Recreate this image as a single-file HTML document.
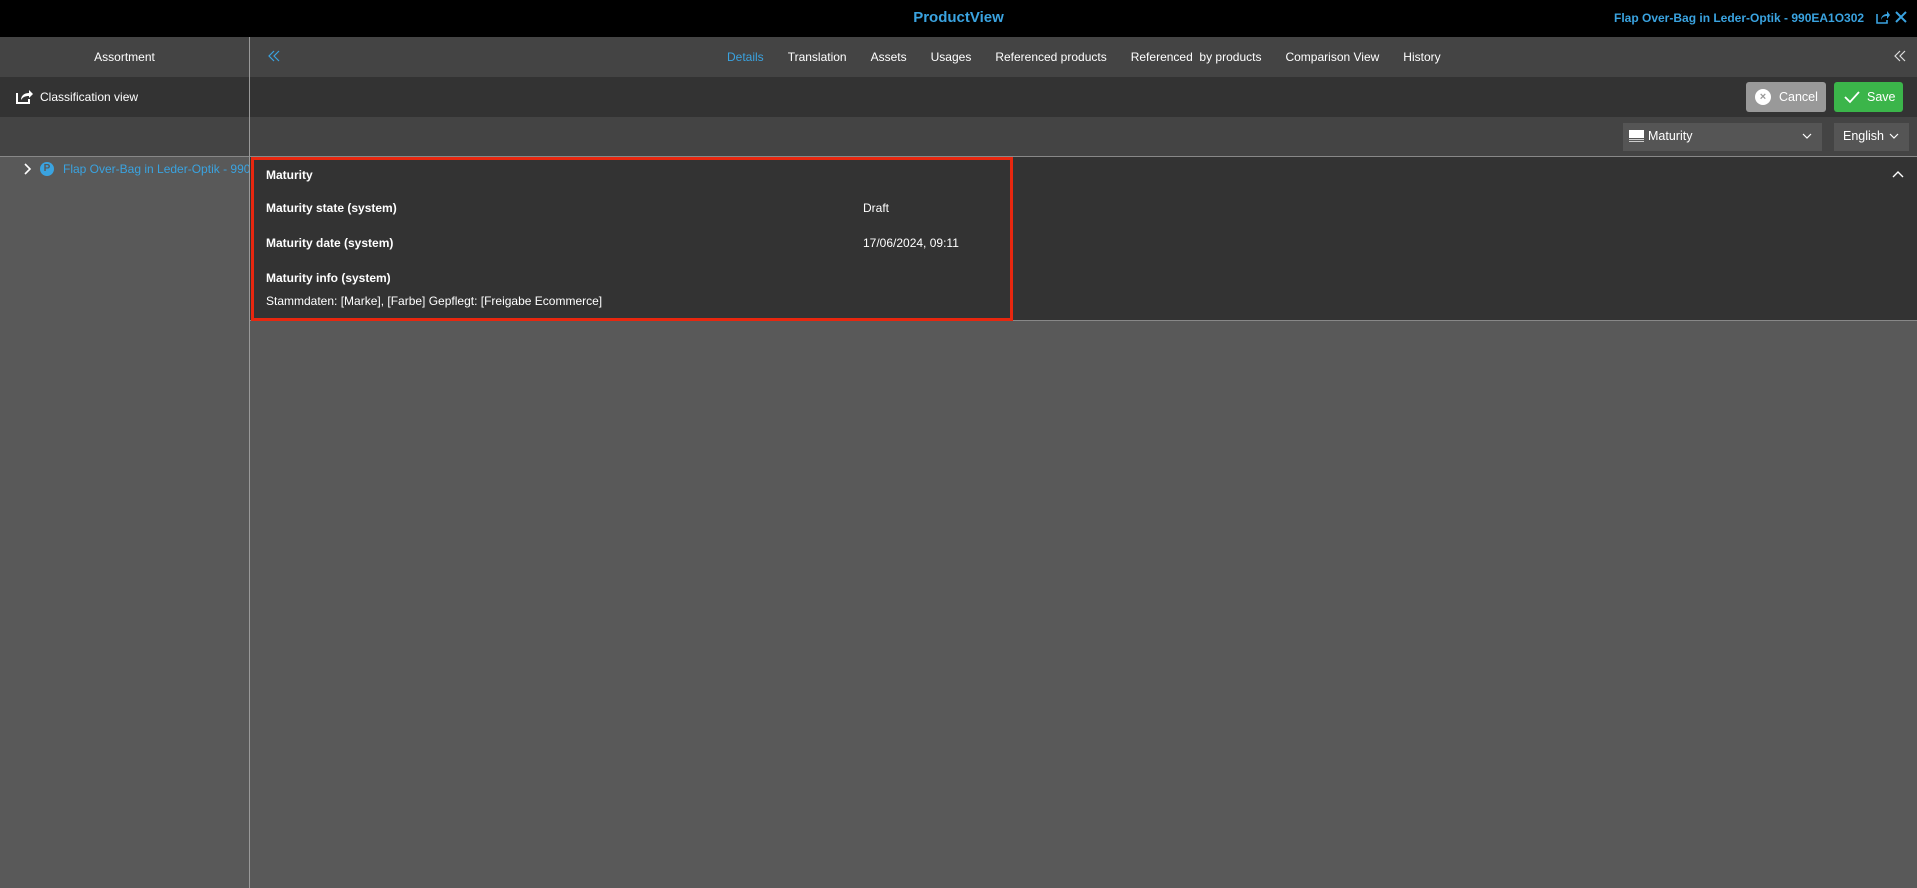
<!DOCTYPE html>
<html><head><meta charset="utf-8"><style>
*{box-sizing:border-box;margin:0;padding:0}
body{width:1917px;height:888px;background:#595959;font-family:"Liberation Sans",Arial,sans-serif;color:#fff;position:relative;overflow:hidden;font-size:12px}
.a{position:absolute}
.b{font-weight:bold}
</style></head><body>
<div class="a" style="left:0;top:0;width:1917px;height:37px;background:#000"></div>
<div class="a b" style="left:0;width:1917px;top:9px;text-align:center;color:#3aa3e0;font-size:15px">ProductView</div>
<div class="a b" style="left:1614px;top:11px;color:#3aa3e0;font-size:12px">Flap Over-Bag in Leder-Optik - 990EA1O302</div>
<svg class="a" style="left:1876px;top:10px" width="14" height="14" viewBox="0 0 14 14"><path d="M1 4v9h10v-3" stroke="#3aa3e0" stroke-width="1.6" fill="none"/><path d="M5 10c0-4 3-6 6-6V1l3 4-3 4V6c-3 0-5 1-6 4z" fill="#3aa3e0"/></svg>
<svg class="a" style="left:1895px;top:11px" width="12" height="12"><path d="M1 1L11 11M11 1L1 11" stroke="#3aa3e0" stroke-width="2"/></svg>

<div class="a" style="left:0;top:37px;width:1917px;height:40px;background:#444"></div>
<div class="a" style="left:0;top:77px;width:1917px;height:40px;background:#333"></div>
<div class="a" style="left:0;top:117px;width:1917px;height:39px;background:#444"></div>
<div class="a" style="left:0;top:156px;width:1917px;height:1px;background:#888"></div>
<div class="a" style="left:249px;top:37px;width:1px;height:851px;background:#999"></div>

<div class="a" style="left:0;width:249px;top:50px;text-align:center;font-size:12px">Assortment</div>
<svg class="a" style="left:15px;top:88px" width="18" height="17" viewBox="0 0 18 17"><path d="M2 5v10h12v-4" stroke="#fff" stroke-width="2" fill="none"/><path d="M6 12c0-5 4-7 8-7V2l4 4-4 4V8c-4 0-6 1-8 4z" fill="#fff"/></svg>
<div class="a" style="left:40px;top:90px;font-size:12px">Classification view</div>
<svg class="a" style="left:24px;top:163px" width="8" height="12"><path d="M1 1l5 5-5 5" stroke="#fff" stroke-width="1.6" fill="none"/></svg>
<div class="a b" style="left:40px;top:162px;width:14px;height:14px;border-radius:50%;background:#3aa3e0;color:#595959;font-size:10px;text-align:center;line-height:14px">P</div>
<div class="a" style="left:63px;top:162px;width:186px;overflow:hidden;white-space:nowrap;color:#3aa3e0;font-size:12px">Flap Over-Bag in Leder-Optik - 990EA1O302</div>

<svg class="a" style="left:267px;top:50px" width="14" height="12"><path d="M7 1L2 6l5 5M12 1L7 6l5 5" stroke="#3aa3e0" stroke-width="1.2" fill="none"/></svg>
<div class="a" style="top:50px;left:727px;font-size:12px;white-space:nowrap">
<span style="color:#3aa3e0">Details</span><span style="margin-left:24px">Translation</span><span style="margin-left:24px">Assets</span><span style="margin-left:24px">Usages</span><span style="margin-left:24px">Referenced products</span><span style="margin-left:24px">Referenced&nbsp; by products</span><span style="margin-left:24px">Comparison View</span><span style="margin-left:24px">History</span></div>
<svg class="a" style="left:1893px;top:50px" width="14" height="12"><path d="M7 1L2 6l5 5M12 1L7 6l5 5" stroke="#ddd" stroke-width="1.2" fill="none"/></svg>

<div class="a" style="left:1746px;top:82px;width:80px;height:30px;background:#999;border-radius:3px"></div>
<div class="a" style="left:1755px;top:89px;width:16px;height:16px;border-radius:50%;background:#fff;color:#999;font-size:11px;text-align:center;line-height:16px;font-weight:bold">×</div>
<div class="a" style="left:1779px;top:90px;font-size:12.5px">Cancel</div>
<div class="a" style="left:1834px;top:82px;width:69px;height:30px;background:#3bb54a;border-radius:3px"></div>
<svg class="a" style="left:1844px;top:90px" width="16" height="14"><path d="M1 7l5 5 9-10" stroke="#fff" stroke-width="1.8" fill="none"/></svg>
<div class="a" style="left:1867px;top:90px;font-size:12.5px">Save</div>

<div class="a" style="left:1623px;top:123px;width:199px;height:28px;background:#555"></div>
<svg class="a" style="left:1629px;top:130px" width="15" height="13"><rect x="0" y="0" width="15" height="8" fill="#fff"/><path d="M0 9.5h15M0 11.5h15" stroke="#ccc"/></svg>
<div class="a" style="left:1648px;top:129px;font-size:12.5px">Maturity</div>
<svg class="a" style="left:1802px;top:133px" width="10" height="7"><path d="M1 1l4 4 4-4" stroke="#fff" stroke-width="1.2" fill="none"/></svg>
<div class="a" style="left:1834px;top:123px;width:75px;height:28px;background:#555"></div>
<div class="a" style="left:1843px;top:129px;font-size:12.5px">English</div>
<svg class="a" style="left:1889px;top:133px" width="10" height="7"><path d="M1 1l4 4 4-4" stroke="#fff" stroke-width="1.2" fill="none"/></svg>

<div class="a" style="left:250px;top:157px;width:1667px;height:164px;background:#333;border-bottom:1px solid #888"></div>
<div class="a" style="left:251px;top:157px;width:762px;height:164px;border:3px solid #e8270f"></div>
<svg class="a" style="left:1892px;top:170px" width="12" height="8"><path d="M1 7l5-5 5 5" stroke="#fff" stroke-width="1.4" fill="none"/></svg>
<div class="a b" style="left:266px;top:168px;font-size:12px">Maturity</div>
<div class="a b" style="left:266px;top:201px;font-size:12px">Maturity state (system)</div>
<div class="a" style="left:863px;top:201px;font-size:12px">Draft</div>
<div class="a b" style="left:266px;top:236px;font-size:12px">Maturity date (system)</div>
<div class="a" style="left:863px;top:236px;font-size:12px">17/06/2024, 09:11</div>
<div class="a b" style="left:266px;top:271px;font-size:12px">Maturity info (system)</div>
<div class="a" style="left:266px;top:294px;font-size:12px">Stammdaten: [Marke], [Farbe] Gepflegt: [Freigabe Ecommerce]</div>
</body></html>
